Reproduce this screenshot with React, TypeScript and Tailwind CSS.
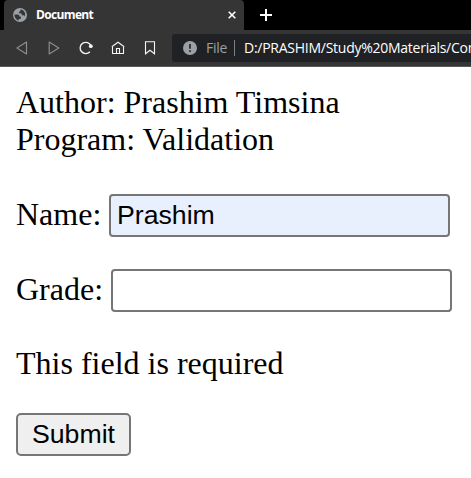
const serif = "font-['Liberation_Serif','Times_New_Roman',serif]";

function GlobeIcon() {
  return (
    <svg width="14" height="14" viewBox="0 0 14 14" className="shrink-0">
      <circle cx="7" cy="7" r="7" fill="#9aa0a6" />
      <path
        d="M1.4 6.6h3.1c1.3 0 1.9.8 1.9 1.8h1.5v1.5c0 .6-.4 1-1 1H5.7v1.5C3 12 1.3 9.500 1.400 6.600ZM7.500 1.600l-.2 1.500c0 .7-.7.9-1.400.9v1.300h1.600c.8 0 1.200.5 1.200 1.100v.9h1.500c.8 0 1.300.5 1.500 1.100 1.400-3-.6-6.500-4.200-6.800Z"
        fill="#353535"
      />
    </svg>
  );
}

function Tabs() {
  return (
    <div className="flex h-[30px] bg-black pl-1">
      <div className="flex w-[240px] items-center rounded-t-[4px] bg-[#353535] pr-2 pl-[9px]">
        <GlobeIcon />
        <span className="ml-[9px] flex-1 text-[12px] leading-4 font-bold tracking-[-0.65px] text-white">
          Document
        </span>
        <svg width="8" height="8" viewBox="0 0 8 8" stroke="#fff" strokeWidth="1.6">
          <path d="M.7.700l6.600 6.600M7.300.700.700 7.300" />
        </svg>
      </div>
      <svg width="12" height="12" viewBox="0 0 12 12" stroke="#fff" strokeWidth="2" className="mt-[9px] ml-4">
        <path d="M6 0v12M0 6h12" />
      </svg>
    </div>
  );
}

function Toolbar() {
  return (
    <div className="flex h-[37px] items-center overflow-hidden border-b border-[#5c5959] bg-[#353535] pl-4">
      <svg width="12" height="14" viewBox="0 0 12 14" fill="none" stroke="#8c8c8c" strokeWidth="1.2" strokeLinejoin="round" className="shrink-0">
        <path d="M10.500 1v12L.9 7Z" />
      </svg>
      <svg width="12" height="14" viewBox="0 0 12 14" fill="none" stroke="#8c8c8c" strokeWidth="1.2" strokeLinejoin="round" className="ml-5 shrink-0">
        <path d="M1.200 1v12L10.800 7Z" />
      </svg>
      <svg width="14" height="14" viewBox="0 0 14 14" fill="none" stroke="#f5f5f5" strokeWidth="1.300" className="ml-[19px] shrink-0">
        <path d="M10.900 10.700A5.600 5.600 0 1 1 11.900 4.800" />
        <circle cx="11.800" cy="5.200" r="1.900" fill="#f5f5f5" stroke="none" />
      </svg>
      <svg width="14" height="14" viewBox="0 0 14 14" fill="none" stroke="#f5f5f5" strokeWidth="1.1" className="ml-[18px] shrink-0">
        <path d="M.8 5.800 7 1.200l6.200 4.600M1.500 5.200v7.300h11V5.200M5.500 12.500v-5h3v5" />
      </svg>
      <svg width="12" height="14" viewBox="0 0 12 14" fill="none" stroke="#f5f5f5" strokeWidth="1.100" className="ml-[19px] shrink-0">
        <path d="M1.500.800h9v12L6 9.300l-4.500 3.500Z" />
      </svg>
      <div className="ml-[16px] flex h-[28px] w-[310px] shrink-0 items-center rounded-[3px] bg-[#202124] pl-[11px] text-[14px] leading-5 whitespace-nowrap">
        <svg width="14" height="14" viewBox="0 0 14 14" className="shrink-0">
          <circle cx="7" cy="7" r="7" fill="#9aa0a6" />
          <path d="M7 3v4.800M7 9.200v1.800" stroke="#202124" strokeWidth="1.600" />
        </svg>
        <span className="ml-[9px] w-[21px] tracking-[-0.3px] text-[#9aa0a6]">File</span>
        <span className="ml-[7px] h-4 w-px shrink-0 bg-[#7b7e82]" />
        <span className="ml-[9px] tracking-[-0.26px] text-white">D:/PRASHIM/Study%20Materials/Com</span>
      </div>
    </div>
  );
}

export default function App() {
  return (
    <div className="h-[478px] w-[471px] overflow-hidden bg-white font-['Open_Sans','Noto_Sans',sans-serif]">
      <Tabs />
      <Toolbar />
      <main className={`${serif} px-4 pt-[17px] text-[32px] leading-[37px] text-black`}>
        <p>Author: Prashim Timsina</p>
        <p>Program: Validation</p>
        <form className="mt-[38px]" onSubmit={(e) => e.preventDefault()}>
          <label className="flex h-[43px] items-start">
            <span className="w-[93px] shrink-0">Name:</span>
            <input
              defaultValue="Prashim"
              className="-mt-0.5 h-[43px] w-[341px] shrink-0 rounded-[4px] border-2 border-[#767676] bg-[#e8f0fe] px-1.5 font-['Liberation_Sans',Arial,sans-serif] text-[26.67px] leading-[31px] outline-none"
            />
          </label>
          <label className="mt-8 flex h-[43px] items-start">
            <span className="w-[95px] shrink-0">Grade:</span>
            <input className="-mt-0.5 h-[43px] w-[341px] shrink-0 rounded-[4px] border-2 border-[#767676] bg-white px-1.5 font-['Liberation_Sans',Arial,sans-serif] text-[26.67px] outline-none" />
          </label>
          <p className="mt-[31px]">This field is required</p>
          <button
            type="submit"
            className="mt-[31px] block h-[43px] w-[115px] rounded-[5px] border-2 border-[#767676] bg-[#efefef] font-['Liberation_Sans',Arial,sans-serif] text-[26.67px] leading-[31px]"
          >
            Submit
          </button>
        </form>
      </main>
    </div>
  );
}
